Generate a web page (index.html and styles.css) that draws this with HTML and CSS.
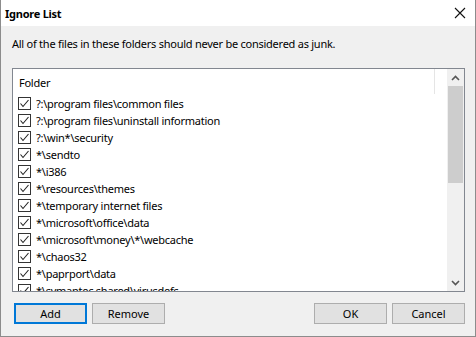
FILE: index.html
```html
<!DOCTYPE html>
<html lang="en">
<head>
  <meta charset="UTF-8" />
  <title>Ignore List</title>
  <link rel="stylesheet" href="styles.css">
</head>
<body>
  <div class="dialog">
    <div class="titlebar">
      <span class="title">Ignore List</span>
      <svg class="close" width="12" height="12" viewBox="0 0 12 12">
        <path d="M1 1 L11 11 M11 1 L1 11" stroke="#111" stroke-width="1.1" fill="none"/>
      </svg>
    </div>

    <div class="content">
      <p class="desc">All of the files in these folders should never be considered as junk.</p>

      <div class="listbox">
        <div class="list">
          <div class="header"><span>Folder</span><span class="sep"></span></div>
          <div class="rows" id="rows"></div>
        </div>
        <div class="scrollbar">
          <div class="arrow">
            <svg width="9" height="6" viewBox="0 0 9 6"><path d="M1 5 L4.5 1.5 L8 5" stroke="#555" stroke-width="1.6" fill="none"/></svg>
          </div>
          <div class="track"><div class="thumb"></div></div>
          <div class="arrow">
            <svg width="9" height="6" viewBox="0 0 9 6"><path d="M1 1 L4.5 4.5 L8 1" stroke="#555" stroke-width="1.6" fill="none"/></svg>
          </div>
        </div>
      </div>

      <div class="buttons">
        <div class="group">
          <button class="btn default">Add</button>
          <button class="btn">Remove</button>
        </div>
        <div class="group">
          <button class="btn">OK</button>
          <button class="btn">Cancel</button>
        </div>
      </div>
    </div>
  </div>

  <script>
    const folders = [
      "?:\\program files\\common files",
      "?:\\program files\\uninstall information",
      "?:\\win*\\security",
      "*\\sendto",
      "*\\i386",
      "*\\resources\\themes",
      "*\\temporary internet files",
      "*\\microsoft\\office\\data",
      "*\\microsoft\\money\\*\\webcache",
      "*\\chaos32",
      "*\\paprport\\data",
      "*\\symantec shared\\virusdefs"
    ];

    const rows = document.getElementById("rows");
    folders.forEach(name => {
      const row = document.createElement("div");
      row.className = "row";
      row.innerHTML =
        '<span class="check"><svg width="11" height="11" viewBox="0 0 11 11">' +
        '<path d="M1.5 5.5 L4 8.5 L9.5 2" stroke="#222" stroke-width="1.1" fill="none"/></svg></span>' +
        '<span class="name"></span>';
      row.querySelector(".name").textContent = name;
      rows.appendChild(row);
    });
  </script>
</body>
</html>
```

FILE: styles.css
```css
* {
  box-sizing: border-box;
}

body {
  margin: 0;
  font-family: "Noto Sans", "Open Sans", sans-serif;
  font-size: 11px;
  letter-spacing: -0.25px;
  color: #000;
  background: #f0f0f0;
}

.dialog {
  width: 476px;
  height: 337px;
  border: 1px solid #8c8c8c;
  border-top: none;
  background: #f0f0f0;
  display: flex;
  flex-direction: column;
}

.titlebar {
  height: 26px;
  background: #fff;
  display: flex;
  align-items: center;
  justify-content: space-between;
  padding: 0 9px 0 4px;
}

.title {
  font-weight: bold;
  font-size: 11px;
}

.content {
  flex: 1;
  padding: 10px 10px 0 11px;
  display: flex;
  flex-direction: column;
}

.desc {
  margin: 0;
  line-height: 16px;
}

.listbox {
  margin-top: 16px;
  height: 224px;
  border: 1px solid #828790;
  background: #fff;
  display: flex;
  overflow: hidden;
}

.list {
  flex: 1;
  overflow: hidden;
}

.header {
  height: 26px;
  display: flex;
  align-items: center;
  justify-content: space-between;
  padding-left: 6px;
}

.sep {
  width: 1px;
  height: 25px;
  background: #e5e5e5;
  margin-right: 12px;
  align-self: flex-start;
}

.row {
  height: 17px;
  display: flex;
  align-items: center;
  padding-left: 5px;
}

.check {
  width: 13px;
  height: 13px;
  border: 1px solid #333;
  background: #fff;
  display: flex;
  align-items: center;
  justify-content: center;
  margin-right: 5px;
}

.name {
  white-space: nowrap;
}

.scrollbar {
  width: 17px;
  background: #f0f0f0;
  display: flex;
  flex-direction: column;
}

.arrow {
  height: 17px;
  display: flex;
  align-items: center;
  justify-content: center;
}

.track {
  flex: 1;
}

.thumb {
  height: 97px;
  margin: 0 1px;
  background: #cdcdcd;
}

.buttons {
  margin-top: 11px;
  display: flex;
  justify-content: space-between;
  padding-left: 2px;
}

.group {
  display: flex;
  gap: 5px;
}

.btn {
  width: 73px;
  height: 21px;
  padding: 0 0 1px;
  font: inherit;
  background: #e1e1e1;
  border: 1px solid #adadad;
  color: #000;
}

.btn.default {
  border: 2px solid #0078d7;
}
```
